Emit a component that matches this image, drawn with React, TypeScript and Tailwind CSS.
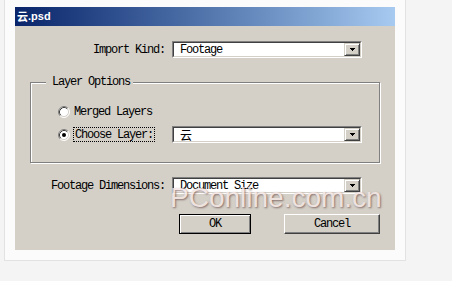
const mono = "font-['Liberation_Mono','Noto_Sans_CJK_SC',monospace] text-[12px] tracking-[-1.2px] text-black";

function DropButton() {
  return (
    <div className="flex h-full w-[16px] items-center justify-center border border-t-[#d4d0c8] border-l-[#d4d0c8] border-b-[#404040] border-r-[#404040] bg-[#d4d0c8] shadow-[inset_1px_1px_0_#fff,inset_-1px_-1px_0_#808080]">
      <svg width="5" height="3" viewBox="0 0 5 3" shapeRendering="crispEdges">
        <rect x="0" y="0" width="5" height="1" fill="#000" />
        <rect x="1" y="1" width="3" height="1" fill="#000" />
        <rect x="2" y="2" width="1" height="1" fill="#000" />
      </svg>
    </div>
  );
}

function Select({ value, cjk }: { value: string; cjk?: boolean }) {
  return (
    <div className="flex h-[17px] w-[190px] border border-t-[#808080] border-l-[#808080] border-b-white border-r-white">
      <div className="flex flex-1 items-center border border-t-[#404040] border-l-[#404040] border-b-[#d4d0c8] border-r-[#d4d0c8] bg-white">
        <span
          className={
            cjk
              ? "flex-1 pl-[6px] font-['Noto_Sans_CJK_SC',sans-serif] text-[12px] leading-none text-black"
              : `flex-1 pl-[6px] leading-none ${mono}`
          }
        >
          {value}
        </span>
        <DropButton />
      </div>
    </div>
  );
}

function Radio({ checked }: { checked?: boolean }) {
  return (
    <svg width="12" height="12" viewBox="0 0 12 12" className="shrink-0">
      <circle cx="6" cy="6" r="5" fill="#fff" />
      <path d="M2.11 9.89 A5.5 5.5 0 0 1 9.89 2.11" fill="none" stroke="#808080" strokeWidth="1" />
      <path d="M9.89 2.11 A5.5 5.5 0 0 1 2.11 9.89" fill="none" stroke="#fff" strokeWidth="1" />
      <path d="M2.82 9.18 A4.5 4.5 0 0 1 9.18 2.82" fill="none" stroke="#404040" strokeWidth="1" />
      <path d="M9.18 2.82 A4.5 4.5 0 0 1 2.82 9.18" fill="none" stroke="#d4d0c8" strokeWidth="1" />
      {checked && <circle cx="6" cy="6" r="2" fill="#000" />}
    </svg>
  );
}

function Row({ label, children }: { label: string; children: React.ReactNode }) {
  return (
    <div className="flex h-[17px] items-center gap-[7px]">
      <span className={`w-[135px] text-right leading-none ${mono}`}>{label}</span>
      {children}
    </div>
  );
}

export default function App() {
  return (
    <div className="h-[281px] w-[452px] overflow-hidden bg-[#f4f4f4]">
      <div className="ml-[4px] h-[261px] w-[402px] border-x border-b border-[#e2e2e2] bg-[#fbfbfb] pl-[10px] pt-[7px]">
        <div className="relative h-[243px] w-[380px] overflow-hidden bg-[#d4d0c8]">
          {/* Title bar */}
          <div className="flex h-[19px] items-center bg-gradient-to-r from-[#0a246a] to-[#a6caf0] pl-[2px] text-white">
            <span className="font-['Noto_Sans_CJK_SC',sans-serif] text-[11px] font-bold leading-none">云</span>
            <span className="font-['Liberation_Sans',sans-serif] text-[11px] font-bold leading-none">.psd</span>
          </div>

          <div className="pl-[15px] pt-[15px]">
            <Row label="Import Kind:">
              <Select value="Footage" />
            </Row>

            {/* Layer Options group */}
            <div className="relative mt-[24px] h-[81px] w-[350px] border border-[#808080] pl-[27px] pt-[20px] shadow-[inset_1px_1px_0_#fff,1px_1px_0_#fff]">
              <span className={`absolute left-[15px] top-[-7px] bg-[#d4d0c8] pl-[6px] pr-[3px] leading-[13px] ${mono}`}>
                Layer Options
              </span>
              <div className="flex h-[17px] items-center">
                <Radio />
                <span className={`ml-[4px] leading-none ${mono}`}>Merged Layers</span>
              </div>
              <div className="mt-[6px] flex h-[17px] items-center">
                <div className="flex w-[114px] items-center">
                  <Radio checked />
                  <span className={`ml-[3px] flex h-[15px] items-center border border-dotted border-black px-[1px] leading-none ${mono}`}>
                    Choose Layer:
                  </span>
                </div>
                <Select value="云" cjk />
              </div>
            </div>

            <div className="mt-[14px]">
              <Row label="Footage Dimensions:">
                <Select value="Document Size" />
              </Row>
            </div>

            <div className="mt-[20px] flex items-center">
              <button className={`ml-[149px] h-[20px] w-[72px] border border-black bg-[#d4d0c8] leading-none shadow-[inset_1px_1px_0_#fff,inset_-1px_-1px_0_#808080] ${mono}`}>
                OK
              </button>
              <button className={`ml-[33px] h-[20px] w-[96px] border border-t-white border-l-white border-b-[#404040] border-r-[#404040] bg-[#d4d0c8] leading-none shadow-[inset_-1px_-1px_0_#808080] ${mono}`}>
                Cancel
              </button>
            </div>
          </div>

          {/* watermark */}
          <div className="pointer-events-none absolute left-[155px] top-[177px] font-['Liberation_Sans',sans-serif] text-[28px] leading-none text-[#f3e6e4] opacity-85 [text-shadow:1px_1px_2px_rgba(90,55,55,0.75)]">
            PConline.com.cn
          </div>
        </div>
      </div>
    </div>
  );
}
